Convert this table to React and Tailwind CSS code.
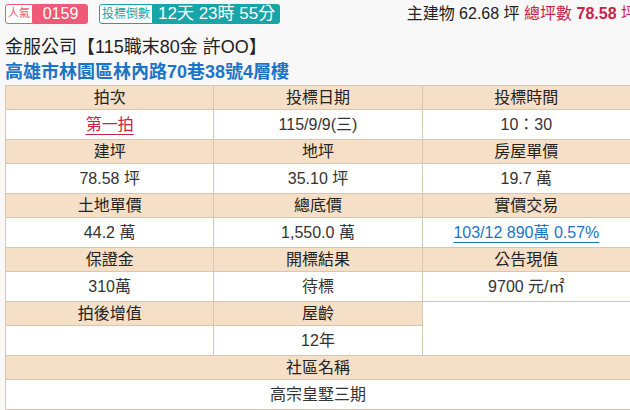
import React from "react";

const cjk = "font-['Liberation_Sans','Noto_Sans_CJK_TC',sans-serif]";

function Head({ children, span }) {
  return (
    <td
      colSpan={span}
      className="h-[24px] bg-[#f5dfc6] border border-[#d6c7b3] text-center text-[16px] text-[#222] leading-none"
    >
      {children}
    </td>
  );
}

function Val({ children, span, rowSpan, className = "" }) {
  return (
    <td
      colSpan={span}
      rowSpan={rowSpan}
      className={
        "h-[30px] bg-white border border-[#d6c7b3] text-center text-[16px] text-[#333] leading-none " +
        className
      }
    >
      {children}
    </td>
  );
}

export default function App() {
  return (
    <div className={"w-[630px] h-[410px] overflow-hidden bg-[#f8f8f8] " + cjk}>
      <div className="flex items-center px-[5px] pt-[3px] h-[24px]">
        <div className="flex h-[20px]">
          <span className="flex items-center px-[2px] border border-[#ef5a78] bg-white text-[#ef5a78] text-[11px] rounded-l-[3px]">
            人氣
          </span>
          <span className="flex items-center w-[55px] justify-center bg-[#ef5a78] text-white text-[16px] rounded-r-[3px]">
            0159
          </span>
        </div>
        <div className="flex h-[20px] ml-[11px]">
          <span className="flex items-center px-[2px] border border-[#17a5a8] bg-white text-[#17a5a8] text-[12px] rounded-l-[3px]">
            投標倒數
          </span>
          <span className="flex items-center px-[5px] bg-[#17a5a8] text-white text-[17px] rounded-r-[3px]">
            12天 23時 55分
          </span>
        </div>
        <div className="ml-auto mr-[-12px] whitespace-nowrap text-[16px] text-[#222]">
          主建物 62.68 坪 <span className="text-[#c9234a]">總坪數 <b>78.58</b> 坪</span>
        </div>
      </div>
      <div className="px-[5px] mt-[10px] text-[18px] text-[#222] leading-[26px]">
        金服公司【115職末80金 許OO】
      </div>
      <div className="px-[5px] text-[18px] font-bold text-[#1c74c9] leading-[25px]">
        高雄市林園區林內路70巷38號4層樓
      </div>
      <table className="ml-[5px] w-[626px] table-fixed border-collapse border border-[#a79e92]">
        <tbody>
          <tr>
            <Head>拍次</Head>
            <Head>投標日期</Head>
            <Head>投標時間</Head>
          </tr>
          <tr>
            <Val>
              <span className="text-[#c9234a] underline underline-offset-4">第一拍</span>
            </Val>
            <Val>115/9/9(三)</Val>
            <Val>10：30</Val>
          </tr>
          <tr>
            <Head>建坪</Head>
            <Head>地坪</Head>
            <Head>房屋單價</Head>
          </tr>
          <tr>
            <Val>78.58 坪</Val>
            <Val>35.10 坪</Val>
            <Val>19.7 萬</Val>
          </tr>
          <tr>
            <Head>土地單價</Head>
            <Head>總底價</Head>
            <Head>實價交易</Head>
          </tr>
          <tr>
            <Val>44.2 萬</Val>
            <Val>1,550.0 萬</Val>
            <Val>
              <span className="text-[#1c74c9] underline underline-offset-4">103/12 890萬 0.57%</span>
            </Val>
          </tr>
          <tr>
            <Head>保證金</Head>
            <Head>開標結果</Head>
            <Head>公告現值</Head>
          </tr>
          <tr>
            <Val>310萬</Val>
            <Val>待標</Val>
            <Val>9700 元/㎡</Val>
          </tr>
          <tr>
            <Head>拍後增值</Head>
            <Head>屋齡</Head>
            <Val rowSpan={2}></Val>
          </tr>
          <tr>
            <Val></Val>
            <Val>12年</Val>
          </tr>
          <tr>
            <Head span={3}>社區名稱</Head>
          </tr>
          <tr>
            <Val span={3}>高宗皇墅三期</Val>
          </tr>
        </tbody>
      </table>
    </div>
  );
}
